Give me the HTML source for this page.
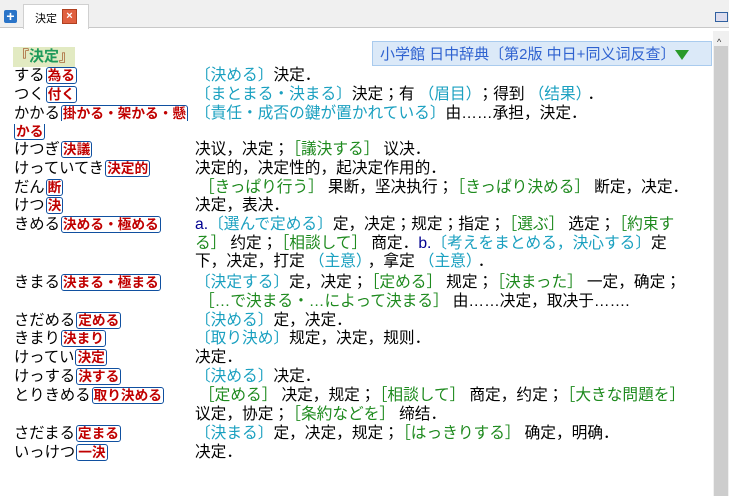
<html><head><style>
body{margin:0;width:729px;height:496px;overflow:hidden;background:#fff;font-family:"Liberation Sans","Noto Sans CJK JP",sans-serif;font-size:15.7px;color:#000;position:relative}
.tb{position:absolute;left:0;top:0;width:729px;height:27px;background:#f0f0f0;border-bottom:1px solid #c8c8c8}
.tab{position:absolute;left:23px;top:4px;width:64px;height:24px;background:#fff;border:1px solid #d0d0d0;border-bottom:none;font-size:11px}
.sb{position:absolute;left:713px;top:31px;width:16px;height:465px;background:#f0f0f0}
.th{position:absolute;left:714px;top:46px;width:14px;height:450px;background:#cdcdcd}
.r{position:absolute;white-space:nowrap;line-height:18.7px}
.l{left:14px;font-size:15.3px}.d{left:195px}
.h{color:#c00000;font-weight:bold;font-size:13.7px;border:1px solid #1050a0;border-radius:3px;padding:0 1px;margin-left:1px}
.c{color:#1aa0c0}.g{color:#1e8a1e;margin:0 4px}.b{color:#000090}.p{color:#1aa0c0;margin:0 4px}
</style></head><body>
<div class="tb">
<div style="position:absolute;left:4px;top:10px;width:13px;height:13px;background:#2a74c8;border-radius:2px;color:#fff;font-size:14px;line-height:13px;text-align:center;font-weight:bold">+</div>
<div class="tab"><span style="position:absolute;left:11px;top:5px">決定</span><div style="position:absolute;left:38px;top:4px;width:13px;height:13px;background:#e06040;border:1px solid #b04020;color:#fff;font-size:11px;line-height:13px;text-align:center;font-weight:bold">×</div></div>
<div style="position:absolute;left:715px;top:12px;width:11px;height:8px;border:1px solid #3060a0;background:#dde"></div>
</div>
<div class="sb"><div style="position:absolute;left:4px;top:6px;font-size:9px;color:#333">^</div></div>
<div class="th"></div>
<div style="position:absolute;left:372px;top:41px;width:340px;height:25px;background:#dbe9f8;border:1px solid #a9cbee;color:#2f62d0;font-size:15px;line-height:25px;white-space:nowrap;padding-left:7px;box-sizing:border-box">小学館 日中辞典〔第2版 中日+同义词反查〕<span style="display:inline-block;width:0;height:0;border-left:7px solid transparent;border-right:7px solid transparent;border-top:10px solid #2a9a2a;vertical-align:middle"></span></div>
<div style="position:absolute;left:13px;top:47px;background:#e2eac2;color:#1e9a5a;font-weight:bold;font-size:15px;line-height:20px;padding:0 1px"><span style="color:#a05020">『</span>決定<span style="color:#a05020">』</span></div>

<div class="r l" style="top:67px">する<span class="h">為る</span></div>
<div class="r d" style="top:67px"><span class="c">〔決める〕</span>決定．</div>
<div class="r l" style="top:86px">つく<span class="h">付く</span></div>
<div class="r d" style="top:86px"><span class="c">〔まとまる・決まる〕</span>決定；有<span class="p">（眉目）</span>；得到<span class="p">（结果）</span>．</div>
<div class="r l" style="top:105px">かかる<span class="h" style="border-bottom:none;border-radius:3px 3px 0 0">掛かる・架かる・懸</span></div>
<div class="r l" style="top:123px"><span class="h" style="margin-left:0;border-top:none;border-radius:0 0 3px 3px">かる</span></div>
<div class="r d" style="top:105px"><span class="c">〔責任・成否の鍵が置かれている〕</span>由……承担，決定．</div>
<div class="r l" style="top:141px">けつぎ<span class="h">決議</span></div>
<div class="r d" style="top:141px">决议，决定；<span class="g">［議決する］</span>议决．</div>
<div class="r l" style="top:160px">けっていてき<span class="h">決定的</span></div>
<div class="r d" style="top:160px">决定的，决定性的，起决定作用的．</div>
<div class="r l" style="top:179px">だん<span class="h">断</span></div>
<div class="r d" style="top:179px"><span class="g">［きっぱり行う］</span>果断，坚决执行；<span class="g">［きっぱり決める］</span>断定，决定．</div>
<div class="r l" style="top:197px">けつ<span class="h">決</span></div>
<div class="r d" style="top:197px">决定，表决．</div>
<div class="r l" style="top:216px">きめる<span class="h">決める・極める</span></div>
<div class="r d" style="top:216px"><span class="b">a.</span><span class="c">〔選んで定める〕</span>定，决定；规定；指定；<span class="g">［選ぶ］</span>选定；<span class="g" style="margin-right:0">［約束す</span><br><span class="g" style="margin-left:0">る］</span>约定；<span class="g">［相談して］</span>商定．<span class="b">b.</span><span class="c">〔考えをまとめる，決心する〕</span>定<br>下，决定，打定<span class="p">（主意）</span>，拿定<span class="p">（主意）</span>．</div>
<div class="r l" style="top:274px">きまる<span class="h">決まる・極まる</span></div>
<div class="r d" style="top:274px"><span class="c">〔決定する〕</span>定，决定；<span class="g">［定める］</span>规定；<span class="g">［決まった］</span>一定，确定；<br><span class="g">［…で決まる・…によって決まる］</span>由……决定，取决于…….</div>
<div class="r l" style="top:312px">さだめる<span class="h">定める</span></div>
<div class="r d" style="top:312px"><span class="c">〔決める〕</span>定，决定．</div>
<div class="r l" style="top:330px">きまり<span class="h">決まり</span></div>
<div class="r d" style="top:330px"><span class="c">〔取り決め〕</span>规定，决定，规则．</div>
<div class="r l" style="top:349px">けってい<span class="h">決定</span></div>
<div class="r d" style="top:349px">决定．</div>
<div class="r l" style="top:368px">けっする<span class="h">決する</span></div>
<div class="r d" style="top:368px"><span class="c">〔決める〕</span>决定．</div>
<div class="r l" style="top:387px">とりきめる<span class="h">取り決める</span></div>
<div class="r d" style="top:387px"><span class="g">［定める］</span>决定，规定；<span class="g">［相談して］</span>商定，约定；<span class="g">［大きな問題を］</span><br>议定，协定；<span class="g">［条約などを］</span>缔结．</div>
<div class="r l" style="top:425px">さだまる<span class="h">定まる</span></div>
<div class="r d" style="top:425px"><span class="c">〔決まる〕</span>定，决定，规定；<span class="g">［はっきりする］</span>确定，明确．</div>
<div class="r l" style="top:444px">いっけつ<span class="h">一決</span></div>
<div class="r d" style="top:444px">决定．</div>
</body></html>
